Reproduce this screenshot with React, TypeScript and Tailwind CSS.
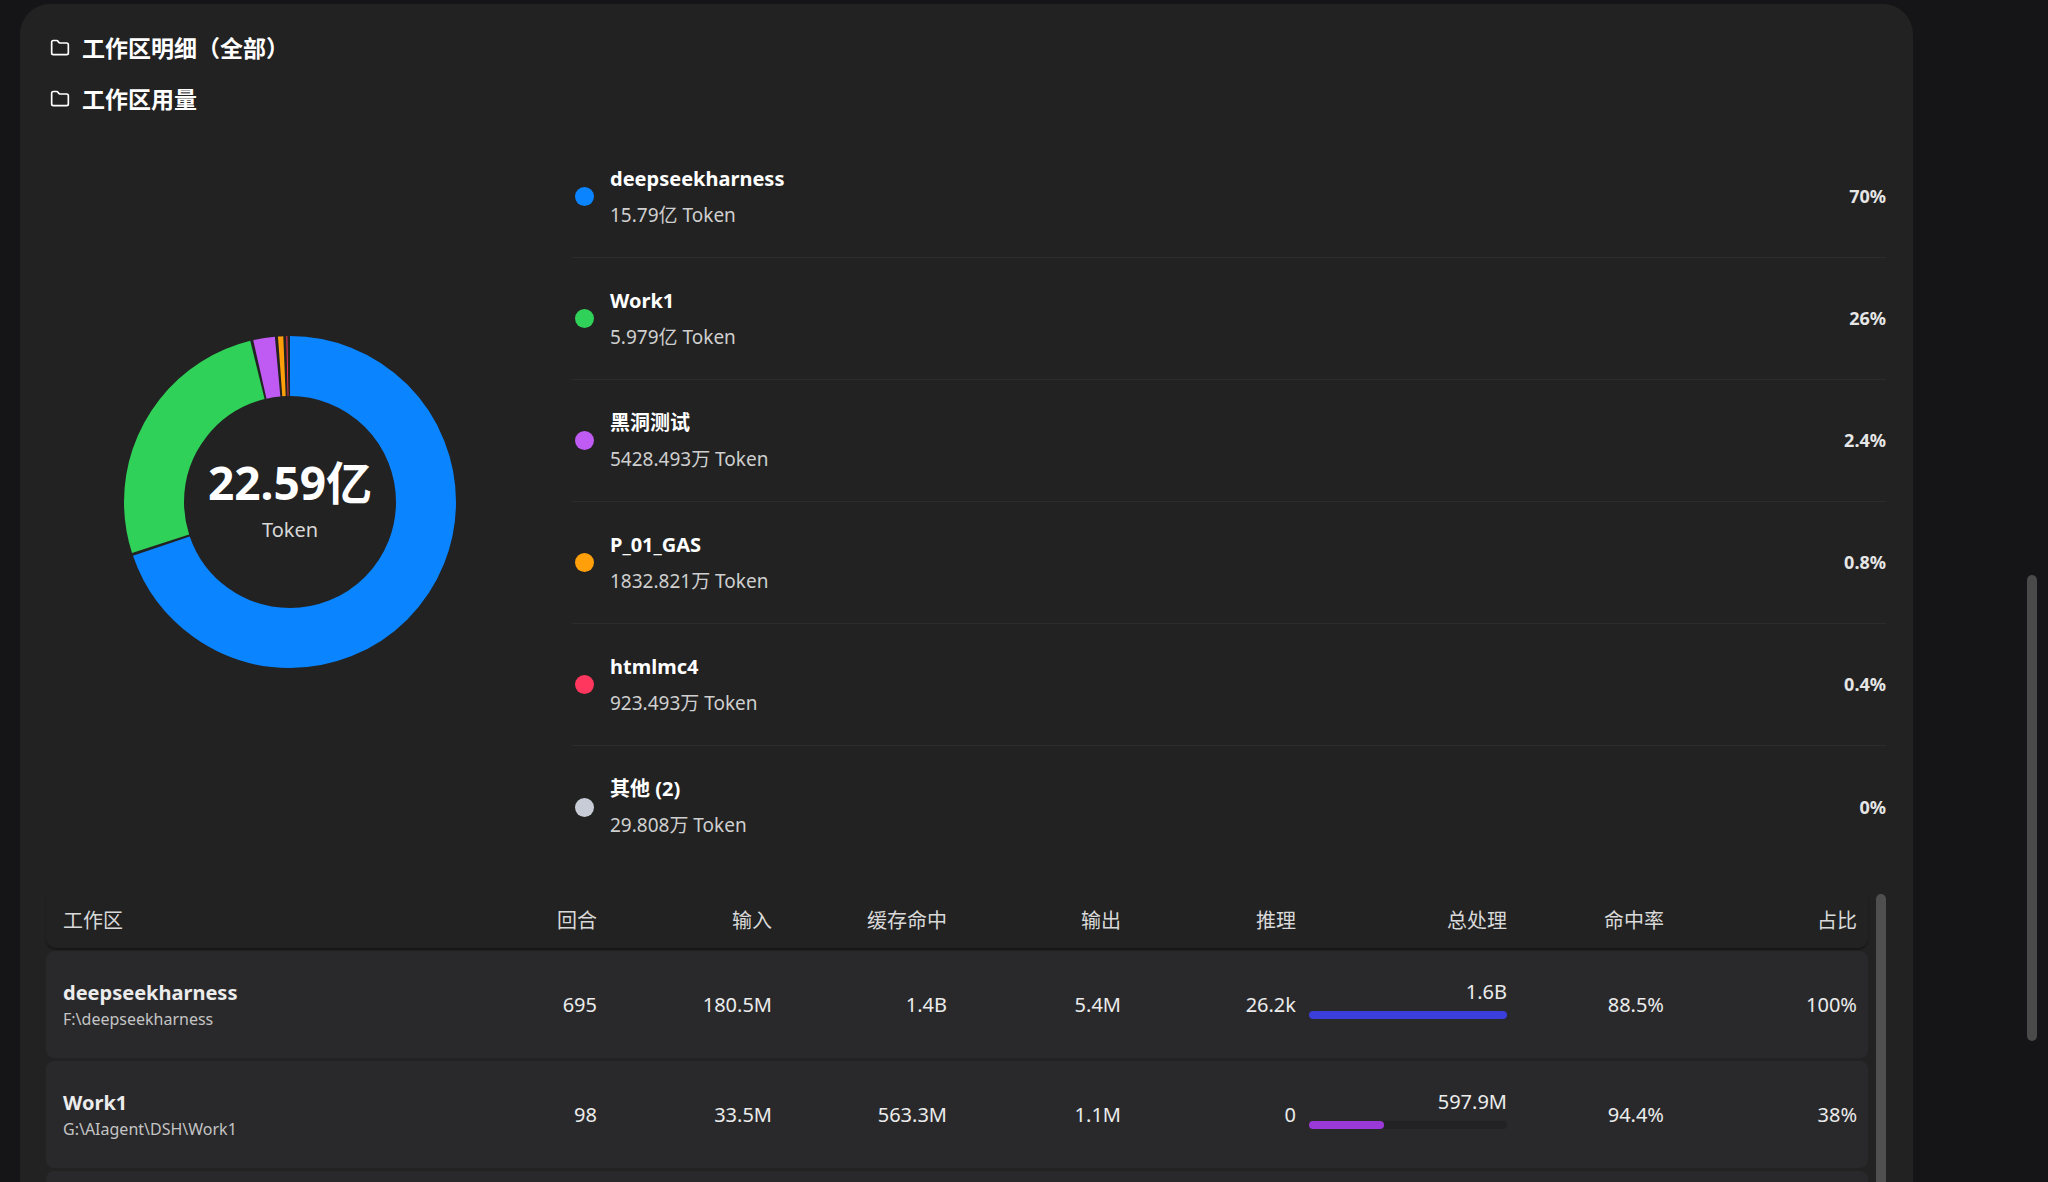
import { Folder } from "lucide-react";

const font = { fontFamily: '"Noto Sans", "Noto Sans CJK SC", sans-serif' };

const slices = [
  { name: "deepseekharness", value: "15.79亿 Token", pct: "70%", share: 70, color: "#0a84ff" },
  { name: "Work1", value: "5.979亿 Token", pct: "26%", share: 26.4, color: "#30d158" },
  { name: "黑洞测试", value: "5428.493万 Token", pct: "2.4%", share: 2.4, color: "#bf5af2" },
  { name: "P_01_GAS", value: "1832.821万 Token", pct: "0.8%", share: 0.8, color: "#ff9f0a" },
  { name: "htmlmc4", value: "923.493万 Token", pct: "0.4%", share: 0.4, color: "#ff375f" },
  { name: "其他 (2)", value: "29.808万 Token", pct: "0%", share: 0, color: "#c7ccd6" },
];

const rows = [
  { name: "deepseekharness", path: "F:\\deepseekharness", turns: "695", input: "180.5M", cache: "1.4B", output: "5.4M", reason: "26.2k", total: "1.6B", bar: 100, barColor: "#3a3fdc", hit: "88.5%", share: "100%" },
  { name: "Work1", path: "G:\\AIagent\\DSH\\Work1", turns: "98", input: "33.5M", cache: "563.3M", output: "1.1M", reason: "0", total: "597.9M", bar: 38, barColor: "#9b38d8", hit: "94.4%", share: "38%" },
  { name: "黑洞测试", path: "D:\\test\\blackhole", turns: "41", input: "4.1M", cache: "49.2M", output: "0.4M", reason: "0", total: "54.3M", bar: 4, barColor: "#bf5af2", hit: "92.1%", share: "3%" },
];

function Donut() {
  const r = 136;
  const c = 2 * Math.PI * r;
  let acc = 0;
  return (
    <svg width="332" height="332" viewBox="0 0 332 332">
      <g transform="rotate(-90 166 166)">
        {slices.filter(s => s.share > 0).map(s => {
          const len = (s.share / 100) * c;
          const gap = 2.5;
          const el = (
            <circle
              key={s.name}
              cx="166"
              cy="166"
              r={r}
              fill="none"
              stroke={s.color}
              strokeWidth="60"
              strokeDasharray={`${Math.max(len - gap, 0.8)} ${c}`}
              strokeDashoffset={-acc}
            />
          );
          acc += len;
          return el;
        })}
      </g>
    </svg>
  );
}

export default function App() {
  const grid = "grid grid-cols-[464px_70px_175px_175px_174px_175px_211px_157px_193px] items-center";
  return (
    <div style={font} className="h-screen w-full overflow-hidden bg-[#151517] text-white flex">
      <div className="ml-[20px] mt-[4px] w-[1893px] bg-[#222222] rounded-t-[30px] pl-[30px] pr-[27px] pt-[26px]">
        <div className="flex items-center gap-[12px] h-[36px] text-[23px] font-bold">
          <Folder className="w-[20px] h-[20px]" strokeWidth={2} />
          <span>工作区明细（全部）</span>
        </div>
        <div className="flex items-center gap-[12px] h-[36px] mt-[15px] text-[23px] font-bold">
          <Folder className="w-[20px] h-[20px]" strokeWidth={2} />
          <span>工作区用量</span>
        </div>

        <div className="flex gap-[42px] mt-[19px]">
          <div className="w-[480px] flex items-center justify-center">
            <div className="relative w-[332px] h-[332px]">
              <Donut />
              <div className="absolute inset-0 flex flex-col items-center justify-center">
                <span className="text-[46px] font-bold leading-none">22.59亿</span>
                <span className="text-[20px] text-[#d8d8d8] mt-[10px]">Token</span>
              </div>
            </div>
          </div>
          <div className="flex-1">
            {slices.map((s, i) => (
              <div key={s.name} className={`h-[122px] flex items-center pl-[3px] ${i < slices.length - 1 ? "border-b border-[#2c2c2c]" : ""}`}>
                <span className="w-[19px] h-[19px] rounded-full" style={{ background: s.color }} />
                <div className="ml-[16px] flex-1">
                  <div className="text-[20px] font-bold leading-[28px]">{s.name}</div>
                  <div className="text-[19px] text-[#cfcfcf] leading-[28px] mt-[8px]">{s.value}</div>
                </div>
                <span className="text-[18px] font-bold text-[#e6e6e6]">{s.pct}</span>
              </div>
            ))}
          </div>
        </div>

        <div className="flex ml-[-4px] mt-[26px]">
          <div className="w-[1822px]">
            <div className={`${grid} h-[54px] px-[17px] text-[20px] leading-[28px] text-[#d9d9d9] shadow-[0_2px_2px_rgba(0,0,0,0.35)] rounded-b-[10px]`}>
              <span>工作区</span>
              <span className="text-right">回合</span>
              <span className="text-right">输入</span>
              <span className="text-right">缓存命中</span>
              <span className="text-right">输出</span>
              <span className="text-right">推理</span>
              <span className="text-right">总处理</span>
              <span className="text-right">命中率</span>
              <span className="text-right">占比</span>
            </div>
            <div className="flex flex-col gap-[3px] mt-[3px]">
              {rows.map(r => (
                <div key={r.name} className={`${grid} h-[107px] px-[17px] bg-[#29292b] rounded-[8px] text-[20px] text-[#ececec]`}>
                  <div>
                    <div className="font-bold text-[20px] leading-[26px]">{r.name}</div>
                    <div className="text-[16px] text-[#c4c4c4] leading-[22px] mt-[2px]">{r.path}</div>
                  </div>
                  <span className="text-right">{r.turns}</span>
                  <span className="text-right">{r.input}</span>
                  <span className="text-right">{r.cache}</span>
                  <span className="text-right">{r.output}</span>
                  <span className="text-right">{r.reason}</span>
                  <div className="pl-[13px] flex flex-col items-end mt-[-12px]">
                    <span className="leading-[26px]">{r.total}</span>
                    <div className="w-full h-[8px] rounded-full bg-[#222224] mt-[6px]">
                      <div className="h-full rounded-full" style={{ width: `${r.bar}%`, background: r.barColor }} />
                    </div>
                  </div>
                  <span className="text-right">{r.hit}</span>
                  <span className="text-right">{r.share}</span>
                </div>
              ))}
            </div>
          </div>
          <div className="ml-[8px] w-[10px] h-[400px] rounded-full bg-[#4f4f4f]" />
        </div>
      </div>
      <div className="flex-1 relative">
        <div className="absolute right-[11px] top-[575px] w-[10px] h-[466px] rounded-full bg-[#4a4a4a]" />
      </div>
    </div>
  );
}
